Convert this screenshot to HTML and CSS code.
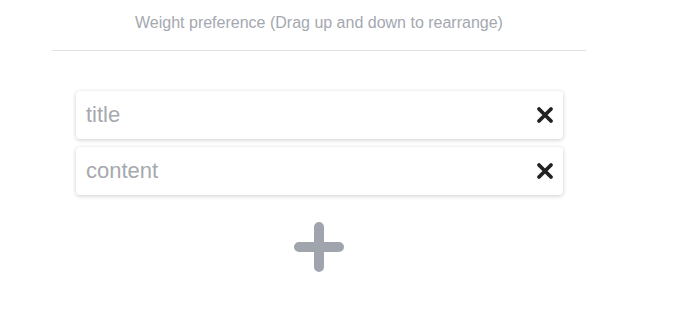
FILE: index.html
```html
<!DOCTYPE html>
<html>
<head>
<meta charset="utf-8">
<link rel="stylesheet" href="styles.css">
</head>
<body>
<div class="panel">
  <div class="heading">Weight preference (Drag up and down to rearrange)</div>
  <div class="list">
    <div class="item">
      <span class="label">title</span>
      <svg class="remove" viewBox="0 0 18 18" width="18" height="18"><path d="M3 3 L15 15 M15 3 L3 15" stroke="#222" stroke-width="3.8" stroke-linecap="round"/></svg>
    </div>
    <div class="item">
      <span class="label">content</span>
      <svg class="remove" viewBox="0 0 18 18" width="18" height="18"><path d="M3 3 L15 15 M15 3 L3 15" stroke="#222" stroke-width="3.8" stroke-linecap="round"/></svg>
    </div>
  </div>
  <div class="add">
    <svg viewBox="0 0 50 50" width="50" height="50"><path d="M25 5 V45 M5 25 H45" stroke="#a0a5ad" stroke-width="10" stroke-linecap="round"/></svg>
  </div>
</div>
</body>
</html>
```
FILE: styles.css
```css
html, body {
  margin: 0;
  padding: 0;
  background: #fff;
  font-family: "Liberation Sans", Arial, sans-serif;
}
.panel {
  width: 534px;
  margin-left: 52px;
}
.heading {
  height: 51px;
  border-bottom: 1px solid #e2e2e2;
  text-align: center;
  font-size: 16px;
  color: #a4a8b0;
  line-height: 18px;
  padding-top: 14px;
  box-sizing: border-box;
}
.list {
  display: flex;
  flex-direction: column;
  gap: 8px;
  margin: 40px 23px 0 24px;
}
.item {
  height: 48px;
  display: flex;
  align-items: center;
  justify-content: space-between;
  padding: 0 9px 0 10px;
  background: #fff;
  border-radius: 4px;
  box-shadow: 0 1px 4px rgba(0,0,0,0.2);
}
.label {
  font-size: 22px;
  color: #a6a9ae;
}
.remove {
  display: block;
}
.add {
  display: flex;
  justify-content: center;
  margin-top: 27px;
}
.add svg {
  display: block;
}
```
